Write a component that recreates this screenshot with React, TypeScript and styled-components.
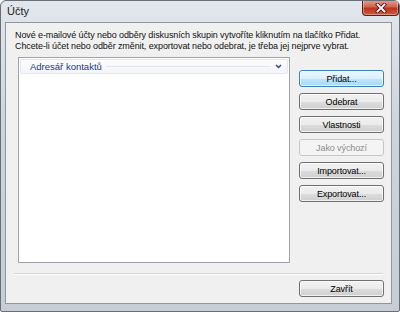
import React from 'react';
import styled, { createGlobalStyle } from 'styled-components';

const GlobalStyle = createGlobalStyle`
  html, body {
    margin: 0;
    padding: 0;
    background: #ffffff;
  }
  * {
    box-sizing: border-box;
  }
`;

const Window = styled.div`
  width: 400px;
  height: 312px;
  display: flex;
  flex-direction: column;
  border: 1px solid #6a6f75;
  border-radius: 6px 6px 2px 2px;
  padding: 0 7px 7px 4px;
  background: linear-gradient(180deg, #e2e7ed 0%, #cdd4dc 40%, #c6cdd5 100%);
  font-family: 'Liberation Sans', Arial, sans-serif;
  overflow: hidden;
`;

const TitleBar = styled.div`
  height: 21px;
  display: flex;
  align-items: flex-start;
  flex-shrink: 0;
`;

const Title = styled.div`
  padding: 4px 0 0 2px;
  font-size: 11px;
  color: #1a1a1a;
`;

const CloseButton = styled.div`
  margin: -1px -7px 0 auto;
  width: 37px;
  height: 16px;
  border: 1px solid #5a1f1a;
  border-top: none;
  border-radius: 0 0 4px 4px;
  background: linear-gradient(180deg, #e8a393 0%, #d2624f 45%, #bb3520 55%, #cf5a3f 100%);
  display: flex;
  align-items: center;
  justify-content: center;
  box-shadow: inset 0 0 0 1px rgba(255, 255, 255, 0.35);
`;

const Client = styled.div`
  flex: 1;
  display: flex;
  flex-direction: column;
  border: 1px solid #8e979f;
  background: #f0f0f0;
  padding: 7px 0 0 0;
`;

const Intro = styled.div`
  padding-left: 9px;
  font-size: 9px;
  line-height: 11px;
  letter-spacing: -0.1px;
  color: #111;
  white-space: nowrap;
`;

const Main = styled.div`
  flex: 1;
  display: flex;
  gap: 9px;
  margin: 5px 7px 0 12px;
`;

const ListBox = styled.div`
  flex: 1;
  border: 1px solid #a0a4aa;
  background: #ffffff;
  padding: 1px;
`;

const GroupHeader = styled.div`
  height: 15px;
  display: flex;
  align-items: center;
  gap: 4px;
  padding: 0 5px 0 9px;
  border: 1px solid #e3e7ee;
  border-radius: 2px;
  background: linear-gradient(180deg, #fdfdfe 0%, #f3f5f8 100%);
`;

const GroupLabel = styled.span`
  font-size: 9.5px;
  color: #1e3a8c;
`;

const GroupRule = styled.div`
  flex: 1;
  height: 1px;
  background: #e1e5ec;
`;

const ButtonColumn = styled.div`
  width: 85px;
  padding-top: 13px;
  display: flex;
  flex-direction: column;
  gap: 6px;
`;

const Button = styled.div<{ $default?: boolean; $disabled?: boolean }>`
  width: 85px;
  height: 17px;
  display: flex;
  align-items: center;
  justify-content: center;
  border-radius: 3px;
  font-size: 9px;
  letter-spacing: -0.1px;
  border: 1px solid ${p => (p.$disabled ? '#c4c7ca' : p.$default ? '#3c80b8' : '#707070')};
  color: ${p => (p.$disabled ? '#8d8d8d' : '#000')};
  background: ${p =>
    p.$disabled
      ? '#f4f4f4'
      : p.$default
      ? 'linear-gradient(180deg, #eaf6fd 0%, #d9f0fc 50%, #bee6fd 51%, #a7d9f5 100%)'
      : 'linear-gradient(180deg, #f2f2f2 0%, #ebebeb 50%, #dddddd 51%, #cfcfcf 100%)'};
  box-shadow: ${p => (p.$disabled ? 'none' : 'inset 0 0 0 1px rgba(255,255,255,0.7)')};
`;

const Separator = styled.div`
  margin: 10px 8px 0 8px;
  height: 2px;
  border-top: 1px solid #d5d5d5;
  border-bottom: 1px solid #ffffff;
`;

const Footer = styled.div`
  display: flex;
  justify-content: flex-end;
  padding: 5px 7px 6px 0;
`;

const Chevron = () => (
  <svg width="7" height="5" viewBox="0 0 7 5">
    <path d="M1 1 L3.5 3.5 L6 1" fill="none" stroke="#2c4a94" strokeWidth="1.5" />
  </svg>
);

const CloseGlyph = () => (
  <svg width="12" height="10" viewBox="0 0 12 10">
    <path d="M2.5 1.5 L9.5 8.5 M9.5 1.5 L2.5 8.5" stroke="#4a1010" strokeWidth="3.4" strokeLinecap="square" />
    <path d="M2.5 1.5 L9.5 8.5 M9.5 1.5 L2.5 8.5" stroke="#ffffff" strokeWidth="1.8" strokeLinecap="square" />
  </svg>
);

const App = () => (
  <>
    <GlobalStyle />
    <Window>
      <TitleBar>
        <Title>Účty</Title>
        <CloseButton>
          <CloseGlyph />
        </CloseButton>
      </TitleBar>
      <Client>
        <Intro>
          Nové e-mailové účty nebo odběry diskusních skupin vytvoříte kliknutím na tlačítko Přidat.
          <br />
          Chcete-li účet nebo odběr změnit, exportovat nebo odebrat, je třeba jej nejprve vybrat.
        </Intro>
        <Main>
          <ListBox>
            <GroupHeader>
              <GroupLabel>Adresář kontaktů</GroupLabel>
              <GroupRule />
              <Chevron />
            </GroupHeader>
          </ListBox>
          <ButtonColumn>
            <Button $default>Přidat...</Button>
            <Button>Odebrat</Button>
            <Button>Vlastnosti</Button>
            <Button $disabled>Jako výchozí</Button>
            <Button>Importovat...</Button>
            <Button>Exportovat...</Button>
          </ButtonColumn>
        </Main>
        <Separator />
        <Footer>
          <Button>Zavřít</Button>
        </Footer>
      </Client>
    </Window>
  </>
);

export default App;
